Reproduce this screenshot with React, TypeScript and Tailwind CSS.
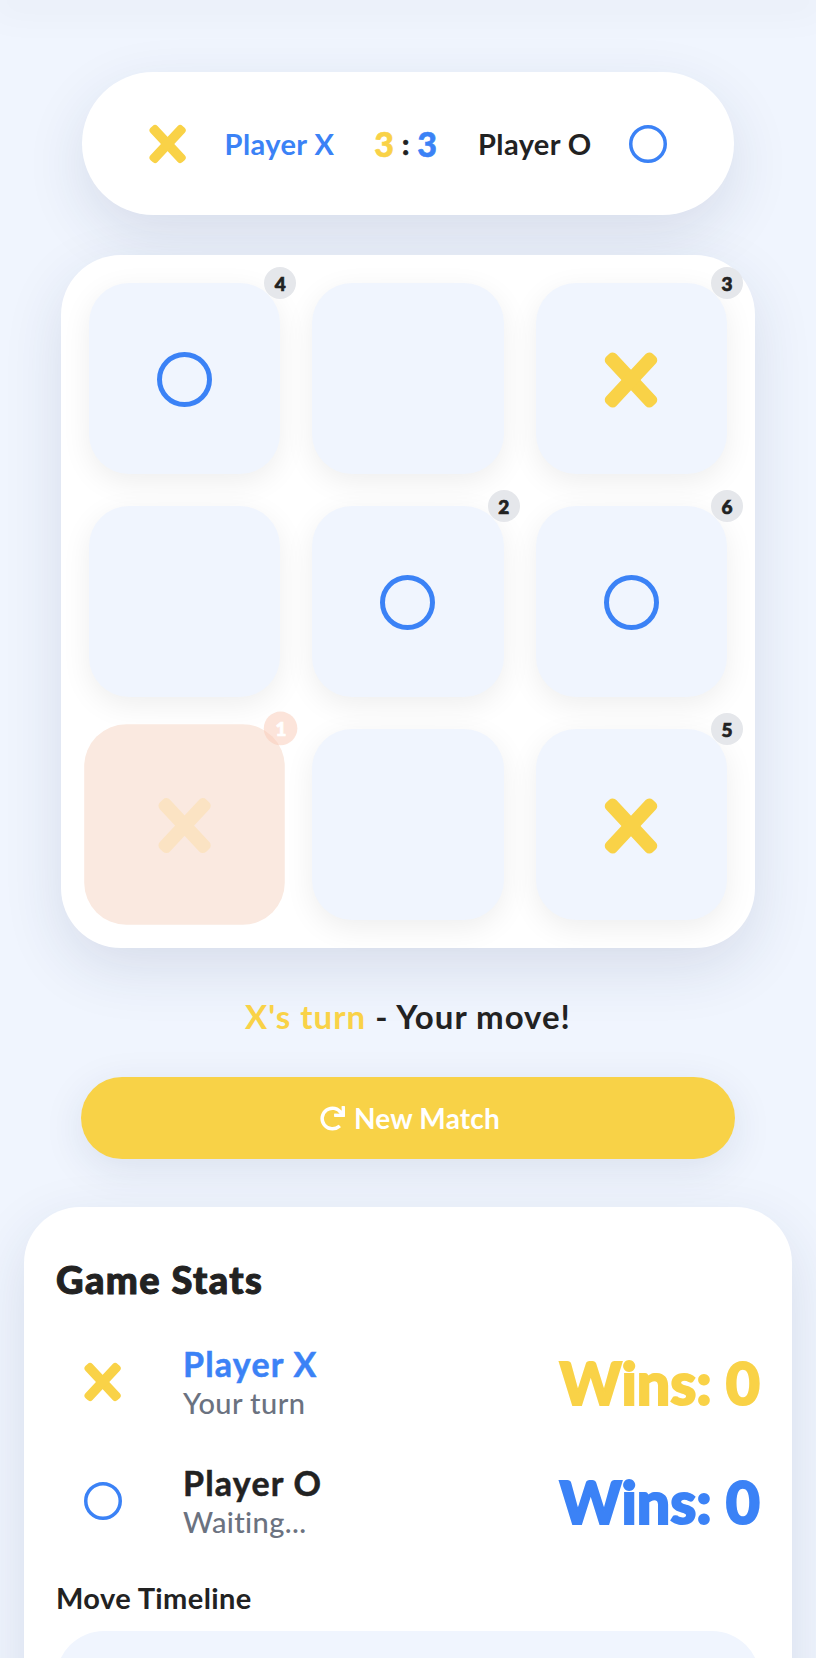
import { FaRedo } from 'react-icons/fa';

const font = "[font-family:Lato,'Noto_Sans',sans-serif]";

function XMark({ height, color = '#f9d247' }: { height: number; color?: string }) {
  return (
    <svg width={(height * 54) / 58} height={height} viewBox="0 0 54 58" fill={color} className="shrink-0">
      <rect x="-7" y="22" width="68" height="14" rx="5" transform="rotate(47 27 29)" />
      <rect x="-7" y="22" width="68" height="14" rx="5" transform="rotate(-47 27 29)" />
    </svg>
  );
}

function OMark({ size, strokeWidth }: { size: number; strokeWidth: number }) {
  return (
    <svg width={size} height={size} viewBox={`0 0 ${size} ${size}`} fill="none" className="shrink-0">
      <circle cx={size / 2} cy={size / 2} r={(size - strokeWidth) / 2} stroke="#3b82f6" strokeWidth={strokeWidth} />
    </svg>
  );
}

function Tile({ mark, order }: { mark?: 'x' | 'o'; order?: number }) {
  return (
    <div className="relative flex h-[191px] items-center justify-center rounded-[40px] bg-[#f0f5fe] pt-[2px] shadow-[0_8px_30px_rgba(0,0,0,0.07)]">
      {mark === 'x' && <XMark height={58} />}
      {mark === 'o' && <OMark size={55} strokeWidth={5} />}
      {order !== undefined && (
        <span className="absolute -right-4 -top-4 flex h-8 w-8 items-center justify-center rounded-full bg-[#e5e7eb] text-[19px] font-black leading-none text-[#222222] [-webkit-text-stroke:0.7px_currentColor]">
          {order}
        </span>
      )}
    </div>
  );
}

function LastMoveTile() {
  return (
    <div className="relative flex h-[191px] scale-105 items-center justify-center rounded-[40px] bg-[#fae9e0] pt-[2px]">
      <XMark height={55} color="#fbe3c3" />
      <span className="absolute -right-[12px] -top-[12px] flex h-8 w-8 items-center justify-center rounded-full bg-[#f9c9b5]/50 text-[18px] font-black leading-none text-white [-webkit-text-stroke:0.7px_currentColor]">
        1
      </span>
    </div>
  );
}

function StatRow({ mark, name, nameColor, status, winsColor }: { mark: 'x' | 'o'; name: string; nameColor: string; status: string; winsColor: string }) {
  return (
    <div className="flex h-[84px] items-center">
      <div className="flex w-[127px] justify-center pr-[33px]">
        {mark === 'x' ? <XMark height={40} /> : <OMark size={38} strokeWidth={3.5} />}
      </div>
      <div className="flex flex-col">
        <span className={`text-[34px] font-bold leading-[41px] tracking-[1.2px] [-webkit-text-stroke:0.5px_currentColor] ${nameColor}`}>{name}</span>
        <span className="text-[29px] font-medium leading-[37px] tracking-[0.4px] text-[#6b7280]">{status}</span>
      </div>
      <span className={`ml-auto text-[59px] font-black leading-none [-webkit-text-stroke:2px_currentColor] ${winsColor}`}>Wins: 0</span>
    </div>
  );
}

export default function App() {
  return (
    <div className={`relative h-[1658px] w-[816px] overflow-hidden bg-[#f0f5fe] pt-[72px] text-[#222222] ${font}`}>
      <div className="absolute inset-x-0 top-0 h-0 shadow-[0_0_40px_10px_rgba(0,0,0,0.05)]" />

      <div className="mx-[82px] flex h-[143px] items-center justify-center rounded-full bg-white shadow-[0_20px_60px_rgba(30,50,90,0.12)]">
        <XMark height={40} />
        <span className="ml-[38px] text-[29px] font-bold tracking-[0.4px] text-[#3b82f6]">Player X</span>
        <span className="ml-[40px] flex items-center gap-[8px] text-[34px] font-black leading-none [-webkit-text-stroke:0.6px_currentColor]">
          <span className="text-[#f9d247]">3</span>
          <span className="text-[28px]">:</span>
          <span className="text-[#3b82f6]">3</span>
        </span>
        <span className="ml-[41px] mr-[37px] text-[29px] font-bold tracking-[0.4px]">Player O</span>
        <OMark size={38} strokeWidth={3.5} />
      </div>

      <div className="mx-[61px] mt-[40px] grid grid-cols-3 gap-8 rounded-[60px] bg-white p-7 shadow-[0_20px_60px_rgba(30,50,90,0.12)]">
        <Tile mark="o" order={4} />
        <Tile />
        <Tile mark="x" order={3} />
        <Tile />
        <Tile mark="o" order={2} />
        <Tile mark="o" order={6} />
        <LastMoveTile />
        <Tile />
        <Tile mark="x" order={5} />
      </div>

      <p className="mt-[48px] text-center text-[33px] font-bold leading-[40px] tracking-[1px]">
        <span className="text-[#f9d247]">X's turn</span> - Your move!
      </p>

      <button className="mx-[81px] mt-[41px] flex h-[82px] w-[654px] items-center justify-center gap-[9px] rounded-full bg-[#f8d247] pl-[4px] text-[28px] font-bold tracking-[0.2px] text-white shadow-[0_10px_40px_rgba(30,50,90,0.1)]">
        <FaRedo className="h-[25px] w-[25px]" />
        New Match
      </button>

      <div className="mx-[24px] mt-[48px] rounded-[56px] bg-white px-[32px] pt-[50px] shadow-[0_20px_60px_rgba(30,50,90,0.12)]">
        <h2 className="text-[38px] font-black leading-[44px] tracking-[1.4px] [-webkit-text-stroke:1px_currentColor]">Game Stats</h2>
        <div className="mt-[39px] flex flex-col gap-[35px]">
          <StatRow mark="x" name="Player X" nameColor="text-[#3b82f6]" status="Your turn" winsColor="text-[#f9d247]" />
          <StatRow mark="o" name="Player O" nameColor="text-[#222222]" status="Waiting..." winsColor="text-[#3b82f6]" />
        </div>
        <h3 className="mt-[36px] text-[29px] font-bold leading-[38px] tracking-[0.4px]">Move Timeline</h3>
        <div className="mt-[14px] h-[120px] rounded-[48px] bg-[#f0f5fe]" />
      </div>
    </div>
  );
}
